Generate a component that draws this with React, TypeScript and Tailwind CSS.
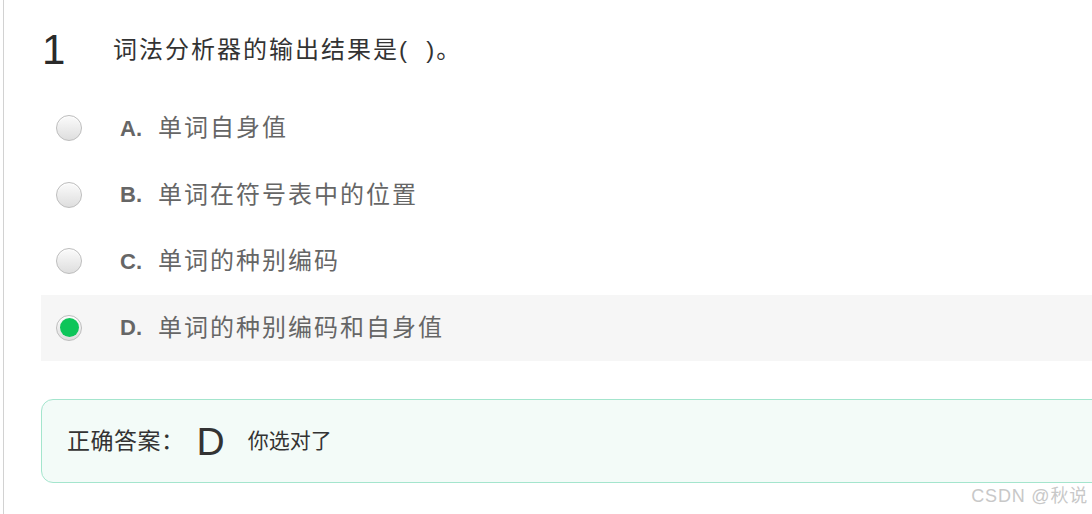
const font = { fontFamily: '"Liberation Sans", "Noto Sans CJK SC", sans-serif' };

const options = [
  { key: "A", text: "单词自身值" },
  { key: "B", text: "单词在符号表中的位置" },
  { key: "C", text: "单词的种别编码" },
  { key: "D", text: "单词的种别编码和自身值" },
];

const Radio = ({ checked }: { checked: boolean }) => (
  <span className="flex h-[26px] w-[26px] items-center justify-center rounded-full border border-[#bdbdbd] bg-gradient-to-b from-[#fbfbfb] to-[#dedede] shadow-[inset_0_1px_1px_rgba(255,255,255,0.9)]">
    {checked && <span className="h-[19px] w-[19px] rounded-full bg-[#0dc559]" />}
  </span>
);

export default function App() {
  const picked = "D";
  return (
    <div className="relative h-[514px] w-[1092px] overflow-hidden bg-white" style={font}>
      <div className="ml-[3px] h-full border-l border-[#d2d2d2] pl-[37px]">
        <div className="w-[1200px]">
          {/* question */}
          <div className="flex h-[95px] items-start pt-[27px]">
            <span className="w-[72px] pl-[1px] text-[42px] leading-[46px] text-[#2a2a2a]">1</span>
            <span className="mt-[8px] text-[24px] leading-[30px] tracking-[2px] text-[#333]">
              词法分析器的输出结果是(&nbsp;&nbsp;)。
            </span>
          </div>

          {/* options */}
          {options.map((o) => (
            <div
              key={o.key}
              className={`flex h-[66.5px] items-center pl-[15px] ${o.key === picked ? "bg-[#f6f6f6]" : ""}`}
            >
              <Radio checked={o.key === picked} />
              <span className="ml-[38px] w-[38px] text-[22px] font-bold text-[#666]">{o.key}.</span>
              <span className="text-[24px] tracking-[2px] text-[#666]">{o.text}</span>
            </div>
          ))}

          {/* answer */}
          <div className="mt-[38px] flex h-[84px] items-center rounded-[12px] border border-[#a4e5cd] bg-[#f3fbf8] pl-[25px]">
            <span className="text-[23px] tracking-[0.5px] text-[#333]">正确答案：</span>
            <span className="ml-[12px] text-[39px] leading-none text-[#333]">D</span>
            <span className="ml-[23px] text-[21px] text-[#333]">你选对了</span>
          </div>
        </div>
      </div>

      <span className="absolute bottom-[4px] right-[4px] text-[18px] tracking-[0.8px] text-[#c8c8c8]">CSDN @秋说</span>
    </div>
  );
}
